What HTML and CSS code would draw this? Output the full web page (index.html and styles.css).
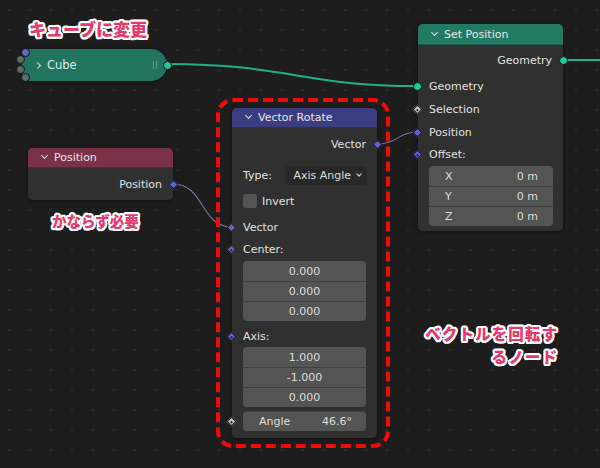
FILE: index.html
```html
<!DOCTYPE html>
<html lang="ja">
<head>
<meta charset="utf-8">
<link rel="stylesheet" href="styles.css">
</head>
<body>
<div class="canvas">
  <svg class="links" width="600" height="468" viewBox="0 0 600 468">
    <path d="M166 64 C 290 64, 300 86, 418 86" class="link geo"/>
    <path d="M563 60 L 600 60" class="link geo"/>
    <path d="M173 184 C 205 184, 200 227, 232 227" class="link vec"/>
    <path d="M377 144 C 398 144, 398 132, 418 132" class="link vec"/>
  </svg>

  <div class="note note-cube">キューブに変更</div>

  <div class="node cube">
    <span class="sock c-vec cs1"></span>
    <span class="sock c-grey cs2"></span>
    <span class="sock c-grey cs3"></span>
    <span class="sock c-grey cs4"></span>
    <span class="chev right"></span>
    <span class="cube-label">Cube</span>
    <span class="grip"></span>
    <span class="sock c-geo out"></span>
  </div>

  <div class="node setpos">
    <div class="head teal"><span class="chev down"></span>Set Position</div>
    <div class="body">
      <div class="row out r22">Geometry<span class="sock c-geo sock-r"></span></div>
      <div class="row in r23 gap4"><span class="sock c-geo sock-l"></span>Geometry</div>
      <div class="row in r23"><span class="dia grey dot sock-l"></span>Selection</div>
      <div class="row in r23"><span class="dia sock-l"></span>Position</div>
      <div class="row in r20"><span class="dia dot sock-l"></span>Offset:</div>
      <div class="field-box box-sp">
        <div class="field split"><span>X</span><span>0 m</span></div>
        <div class="field split"><span>Y</span><span>0 m</span></div>
        <div class="field split"><span>Z</span><span>0 m</span></div>
      </div>
    </div>
  </div>

  <div class="node posnode">
    <div class="head maroon"><span class="chev down"></span>Position</div>
    <div class="body">
      <div class="row out r24">Position<span class="dia sock-r"></span></div>
    </div>
  </div>
  <div class="note note-need">かならず必要</div>

  <div class="node vrot">
    <div class="head blue"><span class="chev down"></span>Vector Rotate</div>
    <div class="body">
      <div class="row out r24">Vector<span class="dia sock-r"></span></div>
      <div class="type-row">
        <span>Type:</span>
        <div class="select">Axis Angle<span class="chev down small"></span></div>
      </div>
      <div class="check-row"><span class="checkbox"></span>Invert</div>
      <div class="row in r22 gap5"><span class="dia sock-l"></span>Vector</div>
      <div class="row in r23"><span class="dia dot sock-l"></span>Center:</div>
      <div class="field-box">
        <div class="field center">0.000</div>
        <div class="field center">0.000</div>
        <div class="field center">0.000</div>
      </div>
      <div class="row in r22 gap4"><span class="dia dot sock-l"></span>Axis:</div>
      <div class="field-box">
        <div class="field center">1.000</div>
        <div class="field center">-1.000</div>
        <div class="field center">0.000</div>
      </div>
      <div class="field-box angle-box">
        <span class="dia grey dot sock-l2"></span>
        <div class="field split single"><span>Angle</span><span>46.6°</span></div>
      </div>
    </div>
  </div>

  <svg class="dash" width="600" height="468" viewBox="0 0 600 468">
    <rect x="218" y="100" width="170" height="346" rx="15" ry="15"/>
  </svg>

  <div class="note note-vec">
    <div class="vec-line">ベクトルを回転す</div>
    <div class="vec-line">るノード</div>
  </div>
</div>
</body>
</html>
```

FILE: styles.css
```css
* { box-sizing: border-box; }
html, body { margin: 0; padding: 0; }
body {
  width: 600px;
  height: 468px;
  overflow: hidden;
  background: #1d1d1d;
  font-family: "DejaVu Sans", "Noto Sans CJK JP", sans-serif;
  font-size: 11px;
  color: #e0e0e0;
}
.canvas {
  position: relative;
  width: 600px;
  height: 468px;
  background-color: #1d1d1d;
  background-image: radial-gradient(circle, #2e2e2e 0.9px, transparent 1.3px);
  background-size: 21px 20px;
  background-position: -1.5px 0;
}
.links, .dash {
  position: absolute;
  left: 0;
  top: 0;
  pointer-events: none;
}
.link { fill: none; }
.link.geo { stroke: #1fb08a; stroke-width: 2; }
.link.vec { stroke: #74749a; stroke-width: 1.1; }
.dash rect {
  fill: none;
  stroke: #f00a0a;
  stroke-width: 4;
  stroke-dasharray: 10 5;
}
.dash { z-index: 5; }

/* nodes */
.node {
  position: absolute;
  background: #303030;
  border-radius: 5px;
  box-shadow: 0 1px 4px rgba(0,0,0,0.45);
}
.head {
  height: 20px;
  display: flex;
  align-items: center;
  padding-left: 14px;
  gap: 7px;
  border-radius: 5px 5px 0 0;
  color: #e6e6e6;
  border-bottom: 1px solid rgba(0,0,0,0.25);
}
.head.teal { background: #237a63; height: 21px; }
.head.maroon { background: #7b3249; }
.head.blue { background: #3c3c80; }

.chev {
  display: inline-block;
  width: 5px;
  height: 5px;
  border-right: 1.3px solid #dcdcdc;
  border-bottom: 1.3px solid #dcdcdc;
}
.chev.down { transform: translateY(-2px) rotate(45deg); }
.chev.right { transform: rotate(-45deg); }
.chev.small { width: 4px; height: 4px; margin-left: 6px; transform: translateY(-2px) rotate(45deg); }

.body { display: flex; flex-direction: column; }
.row {
  position: relative;
  display: flex;
  align-items: center;
}
.row.out { justify-content: flex-end; padding-right: 11px; }
.row.in { padding-left: 11px; }
.r20 { height: 20px; }
.r22 { height: 22px; }
.r23 { height: 23px; }
.r24 { height: 24px; }
.gap4 { margin-top: 4px; }
.gap5 { margin-top: 5px; }

/* sockets */
.sock {
  position: absolute;
  width: 9px;
  height: 9px;
  border-radius: 50%;
  border: 1px solid #151515;
}
.c-geo { background: #1fcc9c; }
.c-vec { background: #6565c2; }
.c-grey { background: #5c6c63; }
.sock-r { right: -5px; top: 50%; margin-top: -4.5px; }
.sock-l { left: -5px; top: 50%; margin-top: -4.5px; }
.dia {
  position: absolute;
  width: 7px;
  height: 7px;
  background: #6565c6;
  border: 1px solid #1a1a1a;
  transform: rotate(45deg);
}
.dia.sock-r { right: -4px; top: 50%; margin-top: -3.5px; }
.dia.sock-l { left: -4px; top: 50%; margin-top: -3.5px; }
.dia.grey { background: #c9c9c9; }
.dia.dot::after {
  content: "";
  position: absolute;
  left: 1.5px;
  top: 1.5px;
  width: 2px;
  height: 2px;
  background: #222;
}

/* cube node */
.cube {
  left: 22px;
  top: 49px;
  width: 145px;
  height: 32px;
  background: #217560;
  border-radius: 4px 16px 16px 4px;
  display: flex;
  align-items: center;
  padding-left: 13px;
  font-size: 11.5px;
}
.cube .chev.right { width: 5px; height: 5px; margin-right: 7px; }
.cube-label { flex: 1; color: #dfe9e4; }
.grip {
  width: 4px;
  height: 8px;
  border-left: 1px solid #5c9a88;
  border-right: 1px solid #5c9a88;
  margin-right: 10px;
}
.cube .out { right: -5px; top: 50%; margin-top: -4.5px; }
.cs1 { left: -1px; top: -1px; }
.cs2 { left: -6px; top: 6px; }
.cs3 { left: -6px; top: 16px; }
.cs4 { left: -1px; top: 24px; }

/* set position */
.setpos {
  left: 418px;
  top: 24px;
  width: 145px;
  height: 207px;
}
.setpos .body { padding-top: 4px; }
.field-box {
  display: flex;
  flex-direction: column;
  margin: 0 11px;
  border-radius: 4px;
  overflow: hidden;
  background: #545454;
}
.field-box.box-sp { margin: 2px 10px 0 11px; }
.field {
  height: 20px;
  display: flex;
  align-items: center;
  color: #dedede;
  border-top: 1px solid #3f3f3f;
}
.field:first-child { border-top: none; }
.field.split { justify-content: space-between; padding: 0 15px 0 16px; }
.field.center { justify-content: center; }

/* position node */
.posnode {
  left: 28px;
  top: 148px;
  width: 145px;
  height: 52px;
}
.posnode .body { padding-top: 4px; }

/* vector rotate */
.vrot {
  left: 232px;
  top: 108px;
  width: 145px;
  height: 330px;
}
.vrot .body { padding-top: 4px; }
.type-row {
  display: flex;
  align-items: center;
  justify-content: space-between;
  margin: 10px 10px 0 11px;
  height: 19px;
}
.select {
  width: 82px;
  height: 19px;
  background: #282828;
  border-radius: 4px;
  display: flex;
  align-items: center;
  justify-content: flex-end;
  padding-right: 6px;
  color: #dedede;
}
.check-row {
  display: flex;
  align-items: center;
  gap: 5px;
  height: 20px;
  margin: 6px 0 0 11px;
}
.checkbox {
  width: 14px;
  height: 14px;
  background: #545454;
  border-radius: 3px;
}
.angle-box {
  position: relative;
  overflow: visible;
  margin-top: 4px;
}
.field.single { border-radius: 4px; padding: 0 14px 0 16px; }
.sock-l2 { left: -15px; top: 50%; margin-top: -3.5px; }

/* notes */
.note {
  position: absolute;
  z-index: 6;
  font-family: "Noto Sans CJK JP", sans-serif;
  font-weight: 900;
  color: #e43a6c;
  line-height: 1.35;
  text-shadow:
    2px 0 0 #fff, -2px 0 0 #fff, 0 2px 0 #fff, 0 -2px 0 #fff,
    1.5px 1.5px 0 #fff, -1.5px 1.5px 0 #fff, 1.5px -1.5px 0 #fff, -1.5px -1.5px 0 #fff,
    2px 1px 0 #fff, -2px 1px 0 #fff, 2px -1px 0 #fff, -2px -1px 0 #fff,
    1px 2px 0 #fff, -1px 2px 0 #fff, 1px -2px 0 #fff, -1px -2px 0 #fff;
}
.note-cube { left: 29px; top: 18px; font-size: 17px; }
.note-need { left: 52px; top: 211px; font-size: 14.5px; }
.note-vec {
  left: 410px;
  top: 322px;
  width: 148px;
  display: flex;
  flex-direction: column;
  align-items: flex-end;
  font-size: 15.5px;
  letter-spacing: 1.1px;
}
.vec-line { line-height: 22.5px; }
```
